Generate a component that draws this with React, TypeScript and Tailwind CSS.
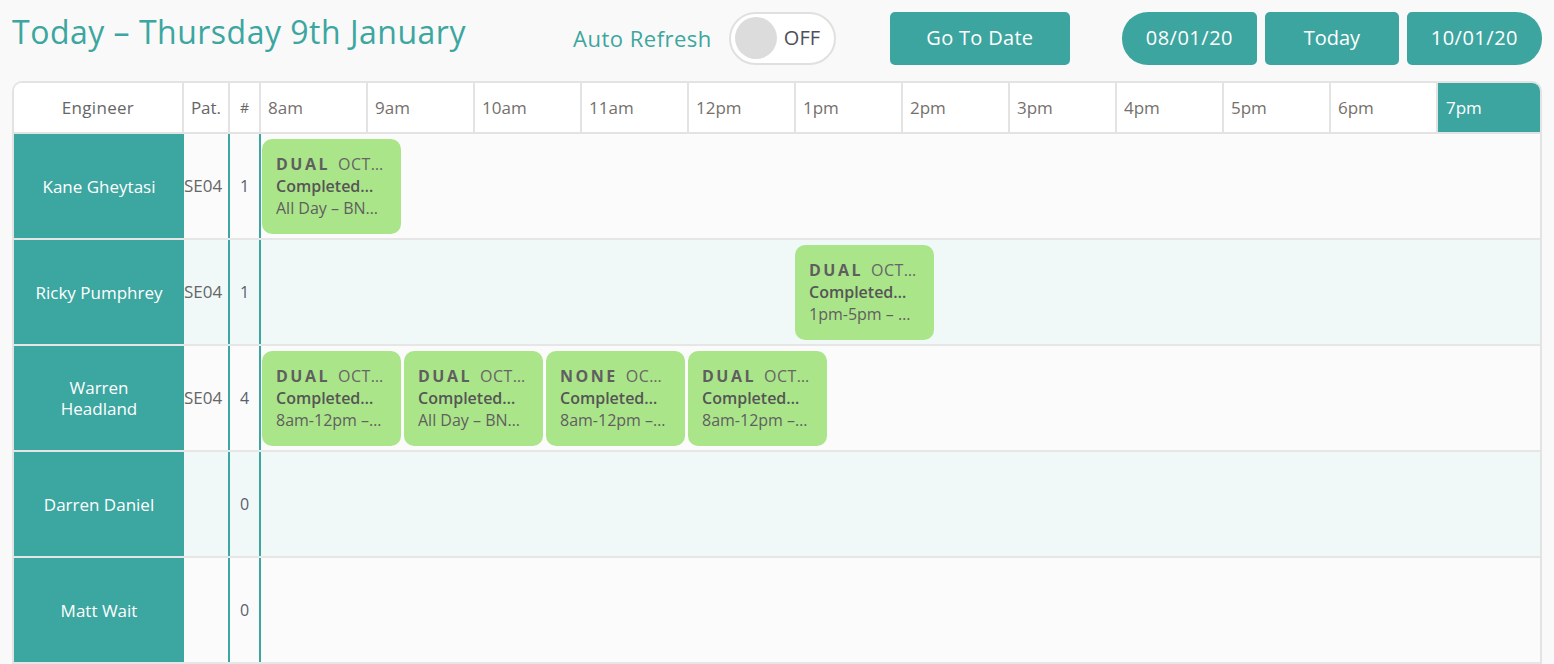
import React from 'react';

interface Job {
  type: string;
  supplier: string;
  status: string;
  slot: string;
}

interface Engineer {
  name: string;
  patch: string;
  startHour: number;
  jobs: Job[];
}

const hours = ['8am', '9am', '10am', '11am', '12pm', '1pm', '2pm', '3pm', '4pm', '5pm', '6pm', '7pm'];

const engineers: Engineer[] = [
  {
    name: 'Kane Gheytasi',
    patch: 'SE04',
    startHour: 0,
    jobs: [{ type: 'DUAL', supplier: 'OCT…', status: 'Completed…', slot: 'All Day – BN…' }],
  },
  {
    name: 'Ricky Pumphrey',
    patch: 'SE04',
    startHour: 5,
    jobs: [{ type: 'DUAL', supplier: 'OCT…', status: 'Completed…', slot: '1pm-5pm – …' }],
  },
  {
    name: 'Warren\nHeadland',
    patch: 'SE04',
    startHour: 0,
    jobs: [
      { type: 'DUAL', supplier: 'OCT…', status: 'Completed…', slot: '8am-12pm –…' },
      { type: 'DUAL', supplier: 'OCT…', status: 'Completed…', slot: 'All Day – BN…' },
      { type: 'NONE', supplier: 'OC…', status: 'Completed…', slot: '8am-12pm –…' },
      { type: 'DUAL', supplier: 'OCT…', status: 'Completed…', slot: '8am-12pm –…' },
    ],
  },
  { name: 'Darren Daniel', patch: '', startHour: 0, jobs: [] },
  { name: 'Matt Wait', patch: '', startHour: 0, jobs: [] },
];

const HOUR_WIDTH = 106.6;

const JobCard: React.FC<{ job: Job; offset: number }> = ({ job, offset }) => (
  <div
    style={{ marginLeft: offset }}
    className="w-[139px] h-[95px] shrink-0 rounded-[10px] bg-[#abe58a] pl-[14px] pr-[12px] pt-[14px] text-[16px] leading-[22px] text-[#5b5b5b]"
  >
    <div className="flex whitespace-nowrap overflow-hidden">
      <span className="font-bold tracking-[2.5px] mr-[8px] text-[#5f5f5f]">{job.type}</span>
      <span className="truncate tracking-[0.5px] text-[#666]">{job.supplier}</span>
    </div>
    <div className="truncate font-semibold text-[#555]">{job.status}</div>
    <div className="truncate text-[#5f5f5f]">{job.slot}</div>
  </div>
);

const App: React.FC = () => {
  return (
    <div className="h-[664px] overflow-hidden bg-[#f9f9f9] px-3 pt-[11px] font-['Open_Sans',sans-serif]">
      {/* top bar */}
      <div className="flex items-center h-[54px]">
        <h1 className="w-[561px] -mt-[12px] text-[32px] leading-none tracking-[0.5px] text-[#3ca6a0]">Today – Thursday 9th January</h1>
        <span className="mr-[17px] text-[22px] tracking-[0.5px] text-[#3ca6a0]">Auto Refresh</span>
        <div className="flex items-center w-[107px] h-[53px] rounded-full border-2 border-[#e0e0e0] bg-white pl-[4px]">
          <div className="w-[42px] h-[42px] rounded-full bg-[#dcdcdc]" />
          <span className="ml-[7px] text-[20px] text-[#4f4f5a]">OFF</span>
        </div>
        <button className="ml-[54px] w-[180px] h-[53px] rounded-[5px] bg-[#3da5a0] text-white text-[20px] tracking-[0.3px]">Go To Date</button>
        <div className="ml-[52px] flex gap-[8px]">
          <button className="w-[135px] h-[53px] rounded-l-[26px] rounded-r-[5px] bg-[#3da5a0] text-white text-[20px] tracking-[0.5px]">08/01/20</button>
          <button className="w-[134px] h-[53px] rounded-[5px] bg-[#3da5a0] text-white text-[20px]">Today</button>
          <button className="w-[135px] h-[53px] rounded-r-[26px] rounded-l-[5px] bg-[#3da5a0] text-white text-[20px] tracking-[0.5px]">10/01/20</button>
        </div>
      </div>

      {/* schedule table */}
      <div className="mt-[16px] w-[1530px] rounded-t-[10px] border-2 border-b-0 border-[#e3e3e3] overflow-hidden">
        <div className="flex h-[51px] bg-white border-b-2 border-[#e3e3e3] text-[17px] text-[#666]">
          <div className="w-[170px] shrink-0 border-r-2 border-[#e3e3e3] flex items-center justify-center tracking-[0.3px]">Engineer</div>
          <div className="w-[46px] shrink-0 border-r-2 border-[#e3e3e3] flex items-center justify-center">Pat.</div>
          <div className="w-[31px] shrink-0 border-r-2 border-[#e3e3e3] flex items-center justify-center text-[14px]">#</div>
          {hours.map((h, i) =>
            i === hours.length - 1 ? (
              <div key={h} className="flex-1 bg-[#3da5a0] text-white flex items-center pl-[8px]">{h}</div>
            ) : (
              <div key={h} className="w-[107px] shrink-0 border-r-2 border-[#e3e3e3] flex items-center pl-[7px] text-[#75706c]">{h}</div>
            )
          )}
        </div>

        {engineers.map((eng, idx) => (
          <div
            key={eng.name}
            className={`flex h-[106px] border-b-2 border-[#e6e6e6] ${idx % 2 === 1 ? 'bg-[#f1f9f8]' : 'bg-[#fbfbfb]'}`}
          >
            <div className="w-[170px] shrink-0 bg-[#3ca6a0] text-white text-[17px] leading-[21px] flex items-center justify-center text-center whitespace-pre-line px-[10px]">
              {eng.name}
            </div>
            <div className="w-[46px] shrink-0 border-r-2 border-[#3ca6a0] flex items-center text-[17px] text-[#666]">
              {eng.patch}
            </div>
            <div className="w-[31px] shrink-0 border-r-2 border-[#3ca6a0] flex items-center justify-center text-[16px] text-[#5a5f70]">
              {eng.jobs.length}
            </div>
            <div className="flex-1 flex gap-[3px] pt-[5px] pl-[1px]">
              {eng.jobs.map((job, j) => (
                <JobCard key={j} job={job} offset={j === 0 ? eng.startHour * HOUR_WIDTH : 0} />
              ))}
            </div>
          </div>
        ))}
      </div>
    </div>
  );
};

export default App;
